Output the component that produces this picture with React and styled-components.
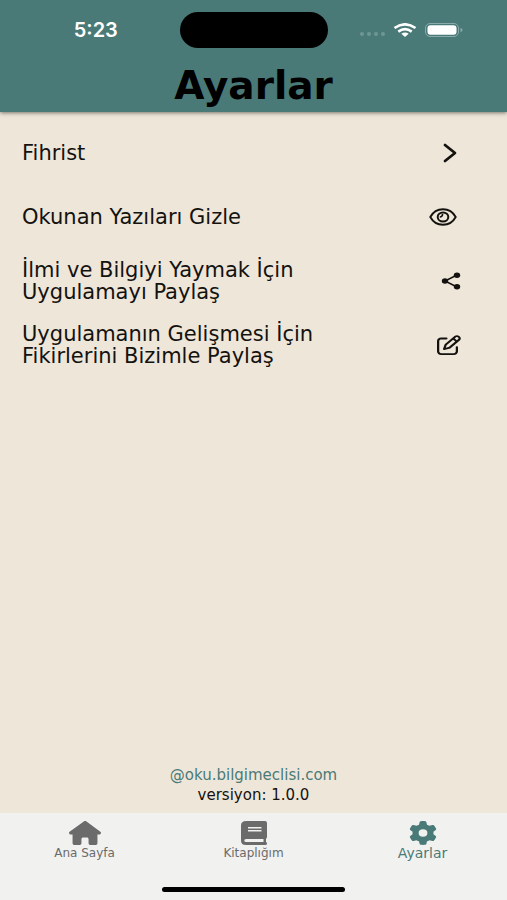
import styled, { createGlobalStyle } from 'styled-components'
import { FaHouse, FaGear, FaRegPenToSquare } from 'react-icons/fa6'

const colors = {
  primary: '#4a7a78',
  background: '#eee6d9',
  tabBar: '#f1f1ef',
  inactive: '#6b6b6b',
  text: '#14120f',
}

const Icon = styled.svg`
  display: block;
  flex: none;
  width: ${({ $width }) => $width}px;
  height: ${({ $height }) => $height}px;
`

const ChevronIcon = () => (
  <Icon viewBox="0 0 14 20" $width={14} $height={20}>
    <path d="M2 2 L12 10 L2 18" fill="none" stroke="currentColor" strokeWidth="2.8" strokeLinecap="round" strokeLinejoin="round" />
  </Icon>
)

const EyeIcon = () => (
  <Icon viewBox="0 0 28 18" $width={28} $height={18}>
    <path d="M1.3 9 C4 4 8.5 1.2 14 1.2 S24 4 26.7 9 C24 14 19.5 16.8 14 16.8 S4 14 1.3 9 Z" fill="none" stroke="currentColor" strokeWidth="1.9" />
    <ellipse cx="14" cy="9" rx="5.3" ry="4.6" fill="none" stroke="currentColor" strokeWidth="2" />
    <path d="M10.8 9 Q13.4 9 13.6 6" fill="none" stroke="currentColor" strokeWidth="1.6" />
  </Icon>
)

const ShareIcon = () => (
  <Icon viewBox="0 0 20 18" $width={20} $height={18}>
    <path d="M16 3 L4 9 L16 15" fill="none" stroke="currentColor" strokeWidth="1.5" />
    <ellipse cx="16" cy="3.2" rx="3.2" ry="2.7" fill="currentColor" />
    <ellipse cx="4" cy="9" rx="3.2" ry="2.7" fill="currentColor" />
    <ellipse cx="16" cy="14.8" rx="3.2" ry="2.7" fill="currentColor" />
  </Icon>
)

const BookIcon = () => (
  <Icon viewBox="0 0 26 24" $width={26} $height={24}>
    <path
      fillRule="evenodd"
      fill="currentColor"
      d="M5 0 H24 Q26 0 26 2 V16 Q26 17.2 25 17.7 V21 Q26 21.4 26 22.5 Q26 24 24.5 24 H5 Q0 24 0 19.5 V4.5 Q0 0 5 0 Z M7 6 V7.5 H20.5 V6 Z M7 9 V10.5 H20.5 V9 Z M5 18 Q3.3 18 3.3 19.5 Q3.3 21 5 21 H22.5 V18 Z"
    />
  </Icon>
)

const WifiIcon = () => (
  <Icon viewBox="0 0 24 14" $width={24} $height={14}>
    <g fill="none" stroke="#fff" strokeWidth="2.6">
      <path d="M1.5 5 Q12 -2.4 22.5 5" />
      <path d="M5.3 8.6 Q12 3.6 18.7 8.6" />
    </g>
    <path d="M8.3 10.8 Q12 8.3 15.7 10.8 L12 14 Z" fill="#fff" />
  </Icon>
)

const BatteryIcon = () => (
  <Icon viewBox="0 0 38 14" $width={38} $height={14}>
    <rect x="0.5" y="0.5" width="33" height="13" rx="4.5" fill="none" stroke="#8aabaa" />
    <rect x="2.5" y="2.2" width="29" height="9.6" rx="3" fill="#fff" />
    <path d="M35.5 4.8 Q37.5 5.5 37.5 7 T35.5 9.2 Z" fill="#8aabaa" />
  </Icon>
)

const SETTINGS = [
  { label: 'Fihrist', icon: <ChevronIcon />, inset: 50 },
  { label: 'Okunan Yazıları Gizle', icon: <EyeIcon />, inset: 50 },
  { label: 'İlmi ve Bilgiyi Yaymak İçin Uygulamayı Paylaş', icon: <ShareIcon />, inset: 46 },
  {
    label: 'Uygulamanın Gelişmesi İçin Fikirlerini Bizimle Paylaş',
    icon: <Icon as={FaRegPenToSquare} preserveAspectRatio="none" $width={24} $height={20} />,
    inset: 46,
  },
]

const TABS = [
  { label: 'Ana Sayfa', icon: <Icon as={FaHouse} preserveAspectRatio="none" $width={32} $height={24} /> },
  { label: 'Kitaplığım', icon: <BookIcon /> },
  { label: 'Ayarlar', icon: <Icon as={FaGear} preserveAspectRatio="none" $width={28} $height={24} />, active: true },
]

const App = () => (
  <>
    <GlobalStyle />
    <Screen>
      <Header>
        <StatusBar>
          <Time>5:23</Time>
          <Island />
          <StatusIcons>
            <Dots>
              <Dot />
              <Dot />
              <Dot />
              <Dot />
            </Dots>
            <WifiIcon />
            <BatteryIcon />
          </StatusIcons>
        </StatusBar>
        <Title>Ayarlar</Title>
      </Header>

      <Content>
        <SettingsList>
          {SETTINGS.map(({ label, icon, inset }) => (
            <li key={label}>
              <SettingButton type="button" $inset={inset}>
                <SettingLabel>{label}</SettingLabel>
                {icon}
              </SettingButton>
            </li>
          ))}
        </SettingsList>
        <Footer>
          <FooterLink href="#bilgimeclisi">@oku.bilgimeclisi.com</FooterLink>
          <Version>versiyon: 1.0.0</Version>
        </Footer>
      </Content>

      <BottomArea>
        <TabBar>
          {TABS.map(({ label, icon, active }) => (
            <TabButton key={label} type="button" $active={active}>
              {icon}
              <span>{label}</span>
            </TabButton>
          ))}
        </TabBar>
        <HomeIndicator />
      </BottomArea>
    </Screen>
  </>
)

export default App

const GlobalStyle = createGlobalStyle`
  * {
    box-sizing: border-box;
  }
  body {
    margin: 0;
    background: ${colors.background};
    color: ${colors.text};
    font-family: 'DejaVu Sans', sans-serif;
  }
  button {
    border: 0;
    padding: 0;
    background: none;
    color: inherit;
    font-family: inherit;
    cursor: pointer;
  }
`
const Screen = styled.div`
  min-height: 100vh;
  display: flex;
  flex-direction: column;
`
const Header = styled.header`
  background: ${colors.primary};
  box-shadow: 0 1px 4px rgba(0, 0, 0, 0.5);
`
const StatusBar = styled.div`
  display: grid;
  grid-template-columns: 1fr 148px 1fr;
  align-items: center;
  padding-top: 12px;
`
const Time = styled.span`
  padding-left: 12px;
  text-align: center;
  color: #fff;
  font-family: Inter, sans-serif;
  font-size: 20px;
  font-weight: 600;
  line-height: 20px;
`
const Island = styled.div`
  height: 36px;
  border-radius: 18px;
  background: #000;
`
const StatusIcons = styled.div`
  display: flex;
  align-items: center;
  justify-content: flex-end;
  gap: 8px;
  padding-right: 44px;
`
const Dots = styled.div`
  display: flex;
  gap: 3px;
  padding-top: 8px;
`
const Dot = styled.i`
  width: 4px;
  height: 4px;
  border-radius: 50%;
  background: #6f9694;
`
const Title = styled.h1`
  margin: 0;
  padding: 14px 0 2px;
  color: #000;
  font-size: 39px;
  font-weight: 700;
  line-height: 48px;
  text-align: center;
`
const Content = styled.main`
  flex: 1;
  display: flex;
  flex-direction: column;
  justify-content: space-between;
  padding-top: 9px;
`
const SettingsList = styled.ul`
  margin: 0;
  padding: 0;
  list-style: none;
`
const SettingButton = styled.button`
  width: 100%;
  height: 64px;
  display: flex;
  align-items: center;
  justify-content: space-between;
  padding: 0 ${({ $inset }) => $inset}px 0 22px;
  text-align: left;
`
const SettingLabel = styled.span`
  max-width: 320px;
  font-size: 21px;
  line-height: 22px;
`
const Footer = styled.footer`
  display: flex;
  flex-direction: column;
  align-items: center;
  padding-bottom: 8px;
  font-size: 15px;
  line-height: 20px;
`
const FooterLink = styled.a`
  color: ${colors.primary};
  text-decoration: none;
`
const Version = styled.span`
  color: ${colors.text};
`
const BottomArea = styled.div`
  padding-bottom: 8px;
  background: ${colors.tabBar};
`
const TabBar = styled.nav`
  display: grid;
  grid-template-columns: repeat(3, 1fr);
  padding-top: 8px;
`
const TabButton = styled.button`
  display: flex;
  flex-direction: column;
  align-items: center;
  color: ${({ $active }) => ($active ? colors.primary : colors.inactive)};
  font-size: ${({ $active }) => ($active ? 14 : 12)}px;
  line-height: 16px;
`
const HomeIndicator = styled.div`
  width: 36%;
  height: 5px;
  margin: 26px auto 0;
  border-radius: 3px;
  background: #000;
`
